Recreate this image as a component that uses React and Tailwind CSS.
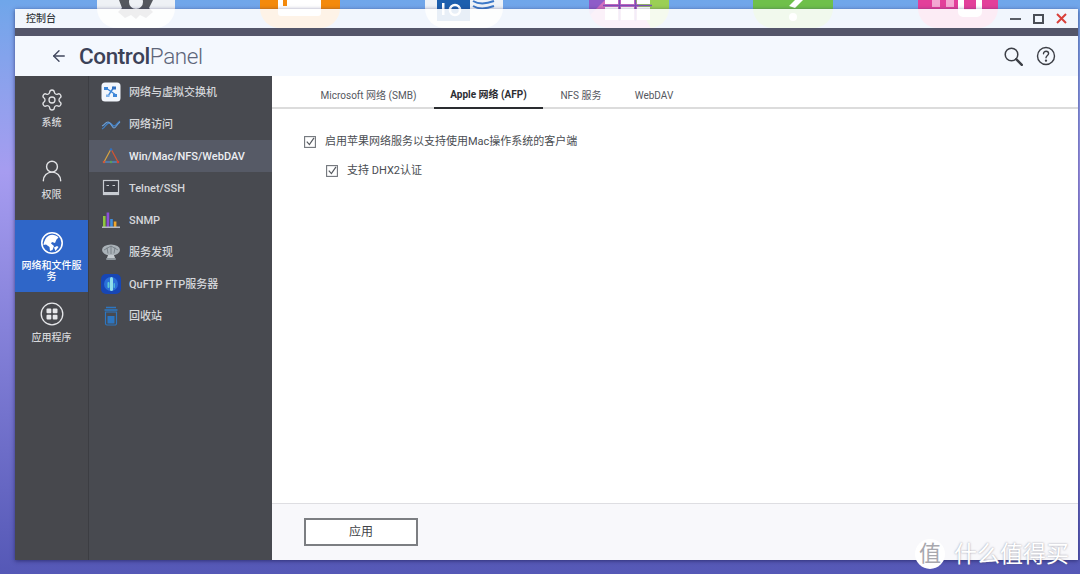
import { ArrowLeft, Settings, UserRound } from 'lucide-react'

const font = { fontFamily: 'Roboto, "Noto Sans CJK SC", sans-serif' }

const IconSwitch = () => (
    <svg width="20" height="20" viewBox="0 0 20 20">
        <rect x="0.5" y="0.5" width="19" height="19" rx="3.5" fill="#f2f6fc" />
        <path d="M5 6l10 7M13 5L7 14" stroke="#3d86d8" strokeWidth="1.4" />
        <rect x="3" y="5" width="4" height="3" fill="#3d86d8" />
        <rect x="11" y="4.5" width="4" height="3" fill="#2f6fc0" />
        <rect x="12" y="12" width="4" height="3" fill="#3d86d8" />
        <rect x="5" y="12.5" width="3.5" height="2.5" fill="#7fb2ea" />
    </svg>
)

const IconAccess = () => (
    <svg width="20" height="20" viewBox="0 0 20 20" fill="none">
        <path d="M1 15c3-1 4-6 7-6s3 3 5 3 3-3 6-5" stroke="#3f7fc4" strokeWidth="1.3" />
        <path d="M1 12c3-1 3-4 6-4s4 6 6 6 3-4 6-6" stroke="#6d9fd6" strokeWidth="1.1" />
    </svg>
)

const IconWin = () => (
    <svg width="20" height="20" viewBox="0 0 20 20" fill="none">
        <path d="M10 3L3 16" stroke="#d9a441" strokeWidth="1.2" />
        <path d="M10 3l7 13" stroke="#d9542f" strokeWidth="1.2" />
        <path d="M3 16h14" stroke="#4f8fd0" strokeWidth="1.2" />
        <circle cx="10" cy="3.5" r="1.3" fill="#2f70c0" />
        <circle cx="3" cy="16" r="1.3" fill="#cf5a3a" />
        <circle cx="17" cy="16" r="1.3" fill="#d8442f" />
        <circle cx="10" cy="16" r="1.2" fill="#58a05a" />
    </svg>
)

const IconTelnet = () => (
    <svg width="20" height="20" viewBox="0 0 20 20" fill="none">
        <rect x="2.5" y="2.5" width="15" height="14" fill="#3c3f47" stroke="#c8ccd2" strokeWidth="1.2" />
        <rect x="2" y="14" width="16" height="3" fill="#c8ccd2" />
        <path d="M5.5 7.5h2.5M11.5 7.5h2.5" stroke="#c8ccd2" strokeWidth="1.2" />
    </svg>
)

const IconSnmp = () => (
    <svg width="20" height="20" viewBox="0 0 20 20">
        <rect x="2" y="6" width="2.6" height="11" fill="#8cc63f" />
        <rect x="5.6" y="2.5" width="2.6" height="14.5" fill="#8a4fd8" />
        <rect x="9.2" y="9" width="2.6" height="8" fill="#3f8fe0" />
        <rect x="12.8" y="11.5" width="2.6" height="5.5" fill="#f0a52a" />
        <rect x="1" y="16.5" width="18" height="1.5" fill="#b4b8c2" />
    </svg>
)

const IconDiscover = () => (
    <svg width="20" height="20" viewBox="0 0 20 20" fill="none">
        <ellipse cx="10" cy="8" rx="9" ry="5.5" fill="#aab2b8" />
        <path d="M3 8l7-4 7 4M10 4v8M6 5.5l1 6M14 5.5l-1 6" stroke="#6f777e" strokeWidth="0.8" />
        <path d="M7 13h6l1 3H6z" fill="#c3c9ce" />
        <rect x="5" y="16" width="10" height="2" rx="1" fill="#8f979d" />
    </svg>
)

const IconFtp = () => (
    <svg width="20" height="20" viewBox="0 0 20 20">
        <rect width="20" height="20" rx="5" fill="#1746b4" />
        <circle cx="10" cy="10" r="7" fill="#2b6fd8" />
        <rect x="9" y="3" width="3" height="14" rx="1.5" fill="#8fe0ea" />
        <rect x="6.5" y="8" width="2" height="6" rx="1" fill="#5ccad6" />
        <rect x="12.5" y="9" width="1.5" height="5" rx="0.75" fill="#49b3d8" />
    </svg>
)

const IconTrash = () => (
    <svg width="20" height="20" viewBox="0 0 20 20" fill="none">
        <path d="M5 1.5h10" stroke="#2d76c0" strokeWidth="1.5" />
        <path d="M3.5 4h13" stroke="#2d76c0" strokeWidth="1.6" />
        <path d="M4.5 6h11v11.5a1.5 1.5 0 01-1.5 1.5H6a1.5 1.5 0 01-1.5-1.5z" stroke="#2d76c0" strokeWidth="1.2" />
        <rect x="6.5" y="10" width="7" height="7.5" fill="#2d76c0" />
    </svg>
)

const IconGlobe = () => (
    <svg width="24" height="24" viewBox="0 0 24 24">
        <circle cx="12" cy="12" r="10.2" fill="#2f66c8" stroke="#fff" strokeWidth="1.6" />
        <path d="M9 4.5c3-1.4 7-0.6 9.5 2l-2 2-1.5 3.5-3-1-1 1.5 3 2.5-1.5 4-2.5 1-0.5-4-3.5-2.5-2.5 0.5C4 10 6 6 9 4.5z" fill="#fff" />
        <path d="M14 16.5l3-1.5 1.5 1-3 4z" fill="#fff" />
    </svg>
)

const IconApps = () => (
    <svg width="24" height="24" viewBox="0 0 24 24" fill="none">
        <circle cx="12" cy="12" r="10.8" stroke="#e6e7ea" strokeWidth="1.3" />
        <rect x="6.5" y="6.5" width="4.8" height="4.8" rx="1" fill="#e6e7ea" />
        <rect x="12.7" y="6.5" width="4.8" height="4.8" rx="1" fill="#e6e7ea" />
        <rect x="6.5" y="12.7" width="4.8" height="4.8" rx="1" fill="#e6e7ea" />
        <rect x="12.7" y="12.7" width="4.8" height="4.8" rx="1" fill="#e6e7ea" />
    </svg>
)

const IconSearch = () => (
    <svg width="19" height="19" viewBox="0 0 19 19" fill="none" stroke="#3c3f46">
        <circle cx="7.5" cy="7.5" r="6.3" strokeWidth="1.5" />
        <path d="M12.2 12.2l5.6 5.6" strokeWidth="2.4" strokeLinecap="round" />
    </svg>
)

const IconHelp = () => (
    <svg width="20" height="20" viewBox="0 0 20 20" fill="none" stroke="#3c3f46" strokeWidth="1.4">
        <circle cx="10" cy="10" r="8.5" />
        <path d="M7.5 7.8c0-1.6 1.1-2.6 2.6-2.6s2.5 1 2.5 2.3c0 1.9-2.6 2.1-2.6 4.3" strokeLinecap="round" />
        <circle cx="10" cy="14.6" r="0.5" fill="#3c3f46" />
    </svg>
)

const Check = () => (
    <svg width="12" height="12" viewBox="0 0 12 12" fill="none" className="shrink-0">
        <rect x="0.6" y="0.6" width="10.8" height="10.8" stroke="#70747a" strokeWidth="1.1" />
        <path d="M2.8 5.6l2.6 3L10 1.8" stroke="#55595f" strokeWidth="1.2" />
    </svg>
)

const mainNav = [
    { label: '系统', icon: <Settings size={24} strokeWidth={1.3} />, pad: 'pt-3', gap: 'mt-[5px]' },
    { label: '权限', icon: <UserRound size={26} strokeWidth={1.3} />, pad: 'pt-[11px]', gap: 'mt-[6px]' },
    { label: '网络和文件服务', icon: <IconGlobe />, pad: 'pt-[11px]', gap: 'mt-[5px]', active: true },
    { label: '应用程序', icon: <IconApps />, pad: 'pt-[10px]', gap: 'mt-[6px]' },
]

const subNav = [
    { label: '网络与虚拟交换机', icon: <IconSwitch /> },
    { label: '网络访问', icon: <IconAccess /> },
    { label: 'Win/Mac/NFS/WebDAV', icon: <IconWin />, active: true },
    { label: 'Telnet/SSH', icon: <IconTelnet /> },
    { label: 'SNMP', icon: <IconSnmp /> },
    { label: '服务发现', icon: <IconDiscover /> },
    { label: 'QuFTP FTP服务器', icon: <IconFtp /> },
    { label: '回收站', icon: <IconTrash /> },
]

const tabs = [
    { label: 'Microsoft 网络 (SMB)', w: 'w-[131px]' },
    { label: 'Apple 网络 (AFP)', w: 'w-[109px]', active: true },
    { label: 'NFS 服务', w: 'w-[76px]' },
    { label: 'WebDAV', w: 'w-[70px]' },
]

// desktop icons peeking out above the window
const desktopIcons = [
    {
        left: 'left-[97px]',
        w: 'w-[78px]',
        bg: 'bg-[#eef1f5]',
        art: (
            <g fill="#55585e">
                <path d="M22 0h34l-4 8 4 4-7 6-6-3-4 4-5-4-6 3-7-6 4-4z" />
                <circle cx="39" cy="2" r="7" fill="#eef1f5" />
            </g>
        ),
    },
    {
        left: 'left-[260px]',
        w: 'w-[80px]',
        bg: 'bg-[#f48a0c]',
        art: <path d="M18 0h5v6h4V0h34v13a3 3 0 01-3 3H21a3 3 0 01-3-3z" fill="#fff" />,
    },
    {
        left: 'left-[425px]',
        w: 'w-[78px]',
        bg: 'bg-[#eef2f8]',
        art: (
            <g>
                <rect x="12" y="0" width="33" height="21" fill="#1d5fae" />
                <rect x="17" y="3" width="2.5" height="12" fill="#fff" />
                <circle cx="30" cy="10" r="5" fill="none" stroke="#fff" strokeWidth="2.5" />
                <path d="M48 1c5 3 13 3 21 0M48 6c5 3 13 3 21 0" fill="none" stroke="#3c78c8" strokeWidth="2" />
            </g>
        ),
    },
    {
        left: 'left-[589px]',
        w: 'w-[80px]',
        bg: 'bg-[#d36fc0]',
        art: (
            <g>
                <path d="M46 0h34v28H62z" fill="#9bcf55" />
                <path d="M0 0h16L0 16z" fill="#8e5cc8" />
                <g fill="#fff">
                    <rect x="16" y="0" width="13" height="4" />
                    <rect x="32" y="0" width="13" height="4" />
                    <rect x="48" y="0" width="13" height="4" />
                    <rect x="16" y="7" width="13" height="13" />
                    <rect x="32" y="7" width="13" height="13" />
                    <rect x="48" y="7" width="13" height="13" />
                </g>
                <path d="M14 5.5h49M30.5 0v21M46.5 0v21" stroke="#7a4fb8" strokeWidth="1.5" />
            </g>
        ),
    },
    {
        left: 'left-[753px]',
        w: 'w-[80px]',
        bg: 'bg-[#6fc04a]',
        art: (
            <g fill="#fff">
                <path d="M36 6l6-6h8l-8 8z" />
                <circle cx="40" cy="17" r="4" />
            </g>
        ),
    },
    {
        left: 'left-[918px]',
        w: 'w-[80px]',
        bg: 'bg-[#e33f9a]',
        art: (
            <g>
                <rect x="14" y="0" width="8" height="7" fill="#f4a8d2" />
                <rect x="28" y="0" width="8" height="7" fill="#f4a8d2" />
                <path d="M40 0h6v10h12V0h6v12a5 5 0 01-5 5H45a5 5 0 01-5-5z" fill="#fff" />
            </g>
        ),
    },
]

export default function App() {
    return (
        <div
            className="relative w-[1080px] h-[574px] overflow-hidden bg-gradient-to-b from-[#6fa6ea] via-[#a69cf0] via-30% to-[#5558b6] pt-[9px] pl-[15px] pr-[2px]"
            style={font}
        >
            {desktopIcons.map((d) => (
                <div key={d.left} className={`absolute top-0 h-[28px] rounded-b-[20px] overflow-hidden ${d.left} ${d.w} ${d.bg}`}>
                    <svg width="80" height="28" viewBox="0 0 80 28">
                        {d.art}
                    </svg>
                </div>
            ))}

            <div className="relative flex flex-col h-[551px] shadow-[0_1px_4px_rgba(30,30,90,0.7)]">
                {/* Title bar */}
                <div className="h-[19px] shrink-0 flex items-center justify-between pl-[11px] pr-[11px] bg-white/90">
                    <span className="text-[10px] font-medium text-[#33363c]">控制台</span>
                    <div className="flex items-center gap-[12px]">
                        <div className="w-[11px] h-[2px] bg-[#5a5e66]" />
                        <div className="w-[11px] h-[10px] border-2 border-[#4a4e56]" />
                        <svg width="11" height="11" viewBox="0 0 11 11" stroke="#d9403a" strokeWidth="2">
                            <path d="M1 1l9 9M10 1l-9 9" />
                        </svg>
                    </div>
                </div>
                <div className="h-[8px] shrink-0 bg-[#54566a]" />

                {/* Header */}
                <div className="h-[40px] shrink-0 flex items-center bg-[#f4f8fe] pl-[35px] pr-[22px]">
                    <ArrowLeft size={18} strokeWidth={1.8} className="text-[#3f465c]" />
                    <div className="ml-[11px] text-[22.5px] leading-none tracking-[-0.4px] text-[#3c4258]">
                        <span className="font-medium">Control</span>
                        <span className="font-light text-[#5d6579]">Panel</span>
                    </div>
                    <div className="ml-auto flex items-center gap-[13px]">
                        <IconSearch />
                        <IconHelp />
                    </div>
                </div>

                {/* Body */}
                <div className="flex flex-1 min-h-0">
                    <div className="w-[74px] shrink-0 flex flex-col bg-[#47484d] border-r border-[#3c3d42]">
                        {mainNav.map((item) => (
                            <div
                                key={item.label}
                                className={`h-[72px] flex flex-col items-center text-center ${item.pad} ${item.active ? 'bg-[#2f66c8] text-white' : 'text-[#e2e3e6]'}`}
                            >
                                <div className="h-[24px] flex items-center justify-center">{item.icon}</div>
                                <div className={`text-[10px] leading-[11px] font-medium px-[4px] ${item.gap} ${item.active ? '' : 'text-[#d6d7da]'}`}>
                                    {item.label}
                                </div>
                            </div>
                        ))}
                    </div>

                    <div className="w-[183px] shrink-0 bg-[#484a50]">
                        {subNav.map((item) => (
                            <div
                                key={item.label}
                                className={`h-[32px] flex items-center gap-[8px] pl-[12px] text-[11px] font-medium ${item.active ? 'bg-[#565a66] text-[#eceef2]' : 'text-[#d4d6da]'}`}
                            >
                                {item.icon}
                                <span className="whitespace-nowrap pt-[2px]">{item.label}</span>
                            </div>
                        ))}
                    </div>

                    <div className="flex-1 min-w-0 flex flex-col bg-white">
                        <div className="h-[33px] shrink-0 flex pl-[31px] border-b-2 border-[#dcdcdc]">
                            {tabs.map((t) => (
                                <div
                                    key={t.label}
                                    className={`h-[33px] pt-[5px] flex items-center justify-center text-[10px] whitespace-nowrap ${t.w} ${t.active ? 'border-b-2 border-[#2a2c30] font-bold text-[#2c2e33]' : 'text-[#55585e]'}`}
                                >
                                    {t.label}
                                </div>
                            ))}
                        </div>

                        <div className="flex-1 pl-[32px] pt-[26px] text-[11px] text-[#4a4d52]">
                            <label className="flex items-center gap-[9px] h-[14px]">
                                <Check />
                                启用苹果网络服务以支持使用Mac操作系统的客户端
                            </label>
                            <label className="flex items-center gap-[9px] h-[14px] mt-[15px] ml-[22px]">
                                <Check />
                                支持 DHX2认证
                            </label>
                        </div>

                        <div className="h-[57px] shrink-0 flex items-center pl-[32px] pb-[1px] bg-[#f8f8fb] border-t border-[#dedee2]">
                            <button className="w-[114px] h-[28px] bg-white border-2 border-[#7c7e82] text-[12px] text-[#404348]">
                                应用
                            </button>
                        </div>
                    </div>
                </div>
            </div>

            {/* Watermark */}
            <div className="absolute right-[11px] bottom-[5px] flex items-center gap-[9px] text-white [text-shadow:0_0_2px_rgba(90,90,110,0.65)]">
                <div className="w-[30px] h-[30px] rounded-full bg-white flex items-center justify-center text-[22px] leading-none text-[#a8a8ae] [text-shadow:none]">
                    值
                </div>
                <span className="text-[23px] leading-none">什么值得买</span>
            </div>
        </div>
    )
}
